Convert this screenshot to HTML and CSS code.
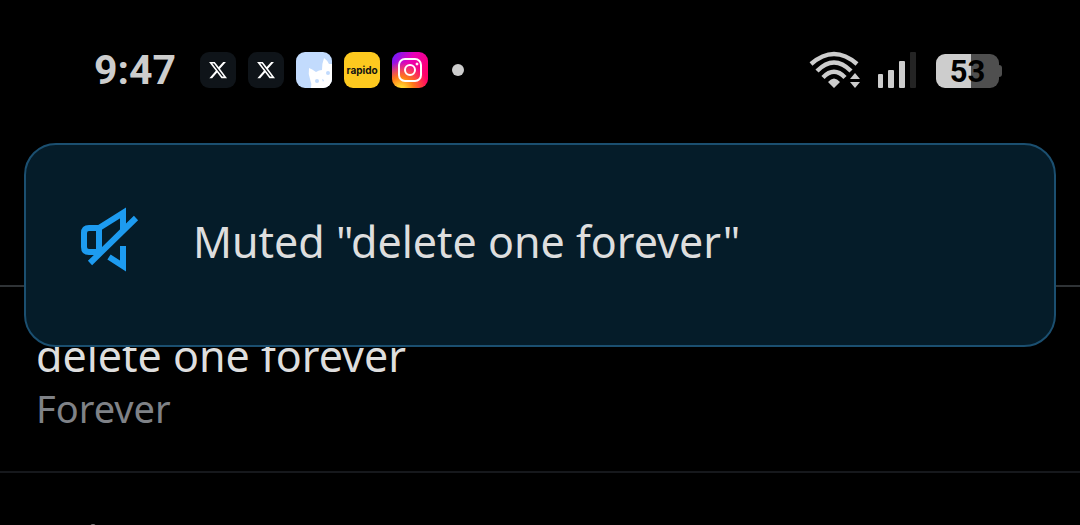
FILE: index.html
```html
<!DOCTYPE html>
<html lang="en">
<head>
<meta charset="utf-8">
<meta name="viewport" content="width=device-width, initial-scale=1">
<title>Muted words</title>
<link rel="stylesheet" href="styles.css">
</head>
<body>
<div class="screen">
  <header class="status-bar">
    <time class="clock">9:47</time>
    <div class="notifications">
      <span class="app app-x"><svg viewBox="0 0 24 24" width="20" height="20"><path fill="#fff" d="M18.244 2.25h3.308l-7.227 8.26 8.502 11.24H16.17l-5.214-6.817L4.99 21.75H1.68l7.73-8.835L1.254 2.25H8.08l4.713 6.231zm-1.161 17.52h1.833L7.084 4.126H5.117z"/></svg></span>
      <span class="app app-x"><svg viewBox="0 0 24 24" width="20" height="20"><path fill="#fff" d="M18.244 2.25h3.308l-7.227 8.26 8.502 11.24H16.17l-5.214-6.817L4.99 21.75H1.68l7.73-8.835L1.254 2.25H8.08l4.713 6.231zm-1.161 17.52h1.833L7.084 4.126H5.117z"/></svg></span>
      <span class="app app-cat"><svg viewBox="0 0 36 36" width="36" height="36"><path fill="#fff" d="M13 16Q16 17 20 20Q23 18 26 18Q26 11 28 6Q31 8 33 12L36 12V36H15Q16 32 14 27Q12 22 13 16Z"/><circle cx="21" cy="29" r="2" fill="#c2dbfd"/><circle cx="32" cy="21" r="2" fill="#c2dbfd"/><path fill="#c2dbfd" d="M26 27l2 1-1 2z"/></svg></span>
      <span class="app app-rapido">rapido</span>
      <span class="app app-instagram"><svg viewBox="0 0 36 36" width="36" height="36" fill="none" stroke="#fff" stroke-width="2"><rect x="7" y="7" width="22" height="22" rx="6"/><circle cx="18" cy="18" r="5"/><circle cx="25" cy="12" r="1" fill="#fff" stroke-width="1"/></svg></span>
      <span class="more-dot"></span>
    </div>
    <div class="indicators">
      <svg class="wifi" viewBox="808 50 54 40" width="54" height="40" fill="none" stroke="#cdcdcd" stroke-width="4.4"><path d="M811 64Q834 44 857 64M817 71Q834 54 851 71M823 77.500Q834 66 845 77.500"/><path fill="#cdcdcd" stroke="none" d="M828 82Q834 75 840 82L834 88ZM850 79L855 73L860 79ZM850 82H860L855 88Z"/></svg>
      <svg class="signal" viewBox="877 50 40 40" width="40" height="40" fill="#cdcdcd"><rect x="878" y="74" width="5" height="14" rx="1"/><rect x="888" y="70" width="6" height="18" rx="1"/><rect x="899" y="61" width="6" height="27" rx="1"/><rect x="910" y="52" width="6" height="36" rx="1" fill="#242424"/></svg>
      <span class="battery">53</span>
    </div>
  </header>
  <main class="word-list">
    <section class="word-row">
      <h2 class="word">delete one forever</h2>
      <p class="duration">Forever</p>
    </section>
    <section class="word-row next-row"><span class="row-tip"></span></section>
  </main>
  <div class="toast" role="status">
    <svg class="mute-icon" viewBox="80 206 60 66" width="60" height="66" fill="none" stroke="#1d9bf0" stroke-width="6"><path d="M99 227H89Q84 227 84 232V246Q84 251 89 251H99ZM99 227L123 212V229M90 262L136 217M109 256L123 265V245"/></svg>
    <p class="toast-text">Muted "delete one forever"</p>
  </div>
</div>
</body>
</html>
```
FILE: styles.css
```css
* { box-sizing: border-box; }
body { margin: 0; background: #000; color: #dedede; font-family: "Noto Sans", sans-serif; }
h2, p { margin: 0; font-weight: 400; }
svg { display: block; }
.screen { position: relative; height: 100vh; overflow: hidden; }

.status-bar { display: flex; align-items: center; height: 140px; padding: 0 78px 0 94px; }
.clock { color: #cdcdcd; font: 700 41px/40px Roboto, sans-serif; }
.notifications { display: flex; align-items: center; gap: 12px; margin-left: 24px; }
.app { display: flex; align-items: center; justify-content: center; width: 36px; height: 36px; border-radius: 9px; overflow: hidden; }
.app-x { background: #0f1419; }
.app-cat { background: #c2dbfd; }
.app-rapido { background: #fdc91f; color: #111; font: 700 10px/12px Inter, sans-serif; }
.app-instagram { background: radial-gradient(circle at 25% 105%, #ffd22e 8%, #ff7a18 28%, transparent 60%), linear-gradient(125deg, #6a1cff 4%, #e800b8 38%, #ff0069 80%); }
.more-dot { width: 12px; height: 12px; margin-left: 12px; border-radius: 50%; background: #cdcdcd; }
.indicators { display: flex; align-items: center; margin-left: auto; }
.signal { margin-left: 15px; }
.battery { position: relative; width: 63px; height: 34px; margin: 2px 3px 0 19px; border-radius: 9px; background: linear-gradient(90deg, #cdcdcd 56%, #4f4f4f 56%); color: #000; font: 700 31px/36px Roboto, sans-serif; text-align: center; }
.battery::after { content: ""; position: absolute; left: 100%; top: 11px; width: 3px; height: 12px; border-radius: 0 3px 3px 0; background: #4f4f4f; }

.word-list { margin-top: 145px; }
.word-row { padding: 42px 36px 38px; border-top: 2px solid #2f3336; }
.word { font-size: 43px; line-height: 54px; }
.duration { color: #7f8287; font-size: 38px; line-height: 50px; }
.next-row { border-color: #16181c; padding-top: 51px; padding-left: 90px; }
.row-tip { display: block; width: 6px; height: 6px; border-radius: 50%; background: #777; }

.toast { position: absolute; top: 143px; left: 24px; right: 24px; display: flex; align-items: center; gap: 53px; height: 204px; padding: 0 54px 10px; border: 2px solid #1b4f70; border-radius: 32px; background: #051c29; }
.toast-text { padding-top: 4px; font-size: 43px; line-height: 56px; }
```
